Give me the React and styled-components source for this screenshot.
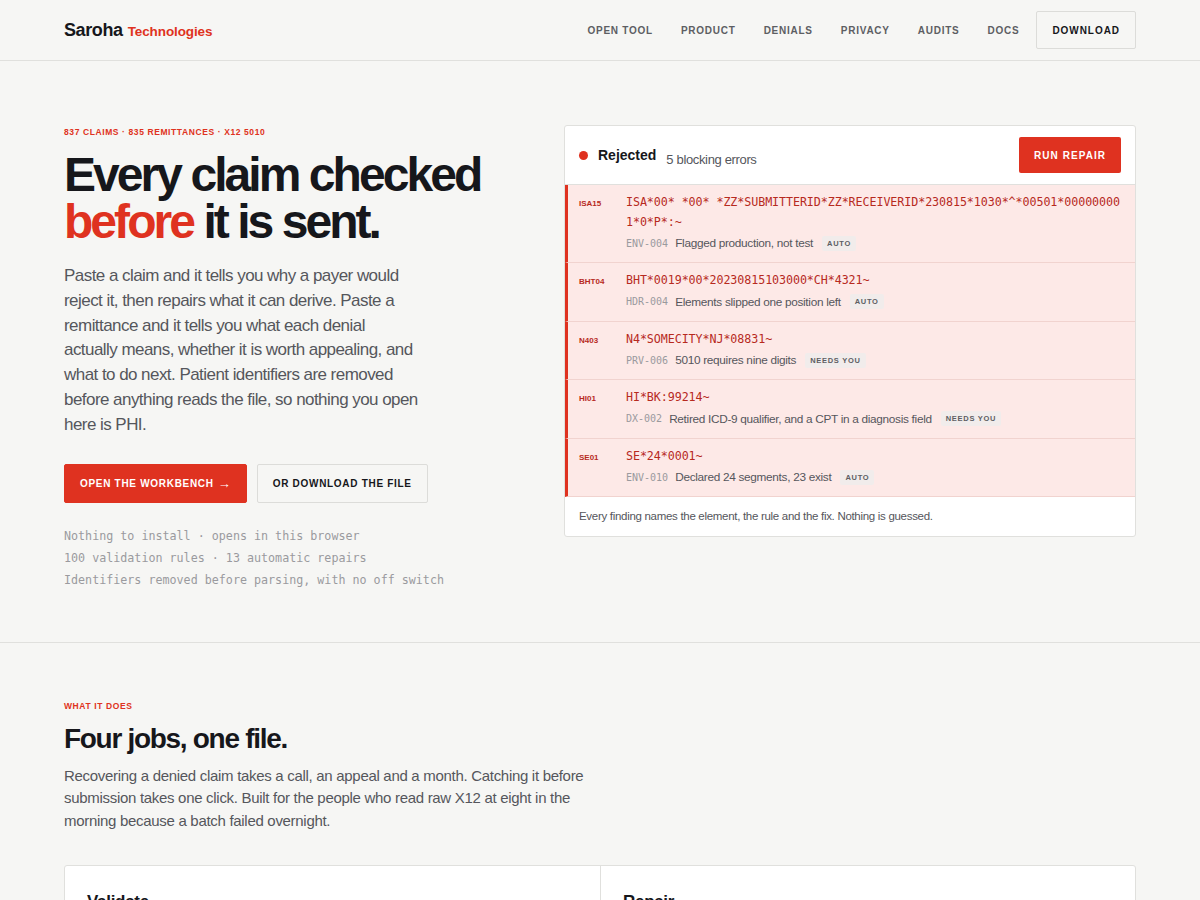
import styled, { createGlobalStyle } from "styled-components";

const c = {
  bg: "#f6f6f4",
  ink: "#16171b",
  body: "#55565c",
  muted: "#9a9a9e",
  red: "#df3220",
  redText: "#b72a1e",
  line: "#e0e0dd",
  rowBg: "#fde9e7",
  rowLine: "#f1d3cf",
};

const sans = `"Liberation Sans", Arial, sans-serif`;
const mono = `"DejaVu Sans Mono", "Liberation Mono", monospace`;

const GlobalStyle = createGlobalStyle`
  * { box-sizing: border-box; }
  body {
    margin: 0;
    background: ${c.bg};
    font-family: ${sans};
    color: ${c.ink};
    -webkit-font-smoothing: antialiased;
  }
`;

const Wrap = styled.div`
  width: 1072px;
  margin: 0 auto;
`;

/* header */
const Header = styled.header`
  height: 61px;
  border-bottom: 1px solid ${c.line};
`;

const HeaderInner = styled(Wrap)`
  height: 60px;
  display: flex;
  align-items: center;
  justify-content: space-between;
`;

const Logo = styled.div`
  display: flex;
  align-items: baseline;
  gap: 5px;
`;

const LogoMain = styled.span`
  font-size: 18px;
  font-weight: 700;
  letter-spacing: -0.4px;
`;

const LogoSub = styled.span`
  font-size: 13.5px;
  font-weight: 700;
  color: ${c.red};
  letter-spacing: -0.1px;
`;

const Nav = styled.nav`
  display: flex;
  align-items: center;
`;

const NavLink = styled.a`
  font-size: 10px;
  font-weight: 700;
  letter-spacing: 0.75px;
  color: #5d5e63;
  text-transform: uppercase;
  padding: 0 14px;
`;

const NavButton = styled.a`
  margin-left: 3px;
  height: 38px;
  padding: 0 15px;
  display: inline-flex;
  align-items: center;
  border: 1px solid #dcdcd9;
  border-radius: 2px;
  font-size: 10px;
  font-weight: 700;
  letter-spacing: 0.95px;
  color: ${c.ink};
`;

/* hero */
const Hero = styled.section`
  border-bottom: 1px solid ${c.line};
`;

const HeroGrid = styled(Wrap)`
  display: grid;
  grid-template-columns: 1fr 572px;
  gap: 48px;
  padding: 66px 0 51px;
`;

const Eyebrow = styled.div`
  font-size: 8.5px;
  font-weight: 700;
  letter-spacing: 0.6px;
  color: ${c.red};
  text-transform: uppercase;
`;

const H1 = styled.h1`
  margin: 14px 0 0;
  font-size: 48px;
  line-height: 47px;
  font-weight: 700;
  letter-spacing: -2.95px;
  color: ${c.ink};
`;

const Red = styled.span`
  color: ${c.red};
`;

const Lead = styled.p`
  margin: 19px 0 0;
  max-width: 357px;
  font-size: 17px;
  line-height: 24.8px;
  color: ${c.body};
  letter-spacing: -0.55px;
`;

const Actions = styled.div`
  display: flex;
  gap: 10px;
  margin-top: 26px;
`;

const Button = styled.a`
  height: 39px;
  padding: 0 15px;
  display: inline-flex;
  align-items: center;
  border-radius: 2px;
  font-size: 10px;
  font-weight: 700;
  letter-spacing: 0.7px;
  text-transform: uppercase;
  background: ${({ primary }) => (primary ? c.red : "transparent")};
  color: ${({ primary }) => (primary ? "#fff" : c.ink)};
  border: 1px solid ${({ primary }) => (primary ? c.red : "#dcdcd9")};
`;

const Arrow = styled.span`
  font-size: 13px;
  margin-left: 4px;
  letter-spacing: 0;
`;

const Notes = styled.ul`
  list-style: none;
  margin: 22px 0 0;
  padding: 0;
`;

const Note = styled.li`
  font-family: ${mono};
  font-size: 11.7px;
  line-height: 22px;
  color: ${c.muted};
`;

/* card */
const Card = styled.div`
  align-self: start;
  margin-top: -2px;
  background: #fff;
  border: 1px solid ${c.line};
  border-radius: 3px;
  overflow: hidden;
`;

const CardHead = styled.div`
  height: 59px;
  display: flex;
  align-items: center;
  padding: 0 14px;
  border-bottom: 1px solid ${c.line};
`;

const Dot = styled.span`
  width: 9px;
  height: 9px;
  border-radius: 50%;
  background: ${c.red};
  margin-right: 10px;
`;

const Status = styled.span`
  font-size: 14px;
  font-weight: 700;
  color: ${c.ink};
  margin-right: 10px;
`;

const StatusSub = styled.span`
  font-size: 13px;
  color: ${c.body};
  margin-top: 8px;
  letter-spacing: -0.35px;
  flex: 1;
`;

const RepairButton = styled.a`
  height: 36px;
  padding: 0 15px;
  display: inline-flex;
  align-items: center;
  background: ${c.red};
  color: #fff;
  border-radius: 2px;
  font-size: 10px;
  font-weight: 700;
  letter-spacing: 1.05px;
`;

const Row = styled.div`
  display: grid;
  grid-template-columns: 47px 1fr;
  padding: 8px 13px 10px 11px;
  background: ${c.rowBg};
  border-left: 3px solid ${c.red};
  border-bottom: 1px solid ${c.rowLine};
`;

const Seg = styled.span`
  font-size: 8px;
  font-weight: 700;
  color: ${c.redText};
  padding-top: 6px;
`;

const Code = styled.div`
  font-family: ${mono};
  font-size: 11.7px;
  line-height: 19.5px;
  letter-spacing: -0.08px;
  color: ${c.redText};
  word-break: break-all;
`;

const Meta = styled.div`
  display: flex;
  align-items: center;
  height: 18px;
  margin-top: 2px;
  font-size: 11.8px;
  letter-spacing: -0.3px;
  color: ${c.body};
`;

const Rule = styled.span`
  font-family: ${mono};
  font-size: 10px;
  letter-spacing: 0;
  color: ${c.muted};
  margin-right: 7px;
`;

const Badge = styled.span`
  margin-left: 9px;
  padding: 3px 5px;
  background: #f1eceb;
  border-radius: 2px;
  font-size: 7.5px;
  font-weight: 700;
  letter-spacing: 0.7px;
  color: #5d5e63;
`;

const CardFoot = styled.div`
  padding: 12px 14px 12px;
  font-size: 11.5px;
  line-height: 15px;
  color: ${c.body};
  letter-spacing: -0.3px;
`;

/* section two */
const Section = styled.section`
  padding: 58px 0 0;
`;

const H2 = styled.h2`
  margin: 11px 0 0;
  font-size: 28px;
  line-height: 34px;
  font-weight: 700;
  letter-spacing: -1.3px;
`;

const SectionLead = styled.p`
  margin: 9px 0 0;
  max-width: 540px;
  font-size: 15px;
  line-height: 22.6px;
  color: ${c.body};
  letter-spacing: -0.3px;
`;

const Jobs = styled.div`
  margin-top: 33px;
  display: grid;
  grid-template-columns: 1fr 1fr;
  background: #fff;
  border: 1px solid ${c.line};
  border-radius: 3px;
`;

const Job = styled.div`
  padding: 26px 22px 40px;
  & + & {
    border-left: 1px solid ${c.line};
  }
`;

const JobTitle = styled.h3`
  margin: 0;
  font-size: 17px;
  font-weight: 700;
  letter-spacing: -0.3px;
`;

const JobText = styled.p`
  margin: 10px 0 0;
  font-size: 14px;
  line-height: 21px;
  color: ${c.body};
`;

const findings = [
  {
    seg: "ISA15",
    code: "ISA*00* *00* *ZZ*SUBMITTERID*ZZ*RECEIVERID*230815*1030*^*00501*000000001*0*P*:~",
    rule: "ENV-004",
    text: "Flagged production, not test",
    badge: "AUTO",
  },
  {
    seg: "BHT04",
    code: "BHT*0019*00*20230815103000*CH*4321~",
    rule: "HDR-004",
    text: "Elements slipped one position left",
    badge: "AUTO",
  },
  {
    seg: "N403",
    code: "N4*SOMECITY*NJ*08831~",
    rule: "PRV-006",
    text: "5010 requires nine digits",
    badge: "NEEDS YOU",
  },
  {
    seg: "HI01",
    code: "HI*BK:99214~",
    rule: "DX-002",
    text: "Retired ICD-9 qualifier, and a CPT in a diagnosis field",
    badge: "NEEDS YOU",
  },
  {
    seg: "SE01",
    code: "SE*24*0001~",
    rule: "ENV-010",
    text: "Declared 24 segments, 23 exist",
    badge: "AUTO",
  },
];

const nav = ["Open tool", "Product", "Denials", "Privacy", "Audits", "Docs"];

export default function App() {
  return (
    <>
      <GlobalStyle />
      <Header>
        <HeaderInner>
          <Logo>
            <LogoMain>Saroha</LogoMain>
            <LogoSub>Technologies</LogoSub>
          </Logo>
          <Nav>
            {nav.map((n) => (
              <NavLink key={n}>{n}</NavLink>
            ))}
            <NavButton>DOWNLOAD</NavButton>
          </Nav>
        </HeaderInner>
      </Header>

      <Hero>
        <HeroGrid>
          <div>
            <Eyebrow>837 claims · 835 remittances · X12 5010</Eyebrow>
            <H1>
              Every claim checked
              <br />
              <Red>before</Red> it is sent.
            </H1>
            <Lead>
              Paste a claim and it tells you why a payer would reject it, then
              repairs what it can derive. Paste a remittance and it tells you
              what each denial actually means, whether it is worth appealing,
              and what to do next. Patient identifiers are removed before
              anything reads the file, so nothing you open here is PHI.
            </Lead>
            <Actions>
              <Button primary>
                Open the workbench<Arrow>→</Arrow>
              </Button>
              <Button>Or download the file</Button>
            </Actions>
            <Notes>
              <Note>Nothing to install · opens in this browser</Note>
              <Note>100 validation rules · 13 automatic repairs</Note>
              <Note>Identifiers removed before parsing, with no off switch</Note>
            </Notes>
          </div>

          <Card>
            <CardHead>
              <Dot />
              <Status>Rejected</Status>
              <StatusSub>5 blocking errors</StatusSub>
              <RepairButton>RUN REPAIR</RepairButton>
            </CardHead>
            {findings.map((f) => (
              <Row key={f.seg}>
                <Seg>{f.seg}</Seg>
                <div>
                  <Code>{f.code}</Code>
                  <Meta>
                    <Rule>{f.rule}</Rule>
                    {f.text}
                    <Badge>{f.badge}</Badge>
                  </Meta>
                </div>
              </Row>
            ))}
            <CardFoot>
              Every finding names the element, the rule and the fix. Nothing is
              guessed.
            </CardFoot>
          </Card>
        </HeroGrid>
      </Hero>

      <Section>
        <Wrap>
          <Eyebrow>What it does</Eyebrow>
          <H2>Four jobs, one file.</H2>
          <SectionLead>
            Recovering a denied claim takes a call, an appeal and a month.
            Catching it before submission takes one click. Built for the people
            who read raw X12 at eight in the morning because a batch failed
            overnight.
          </SectionLead>
          <Jobs>
            <Job>
              <JobTitle>Validate</JobTitle>
              <JobText>
                Runs every rule against the file and names the element that
                breaks it.
              </JobText>
            </Job>
            <Job>
              <JobTitle>Repair</JobTitle>
              <JobText>
                Fixes what can be derived from the file itself, and leaves the
                rest to you.
              </JobText>
            </Job>
          </Jobs>
        </Wrap>
      </Section>
    </>
  );
}
